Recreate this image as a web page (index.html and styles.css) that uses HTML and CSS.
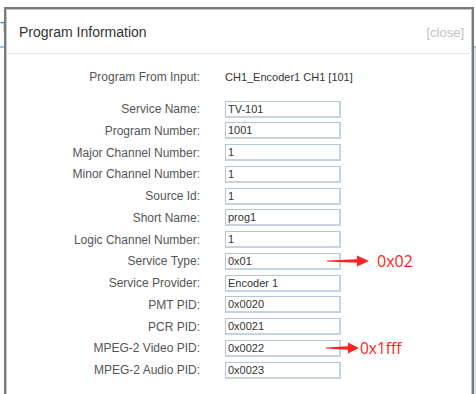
FILE: index.html
```html
<!DOCTYPE html>
<html lang="en">

<head>
    <meta charset="UTF-8">
    <title>Program Information</title>
    <link rel="stylesheet" href="styles.css">
</head>

<body>
    <div class="page">
        <div class="page_tabs"><span class="page_tab">T</span></div>
        <div class="page_panel"></div>
    </div>

    <div class="dialog">
        <header class="dialog_head">
            <h1>Program Information</h1>
            <a href="#" class="dialog_close">[close]</a>
        </header>
        <div class="dialog_body">
            <div class="row row_first">
                <label>Program From Input:</label>
                <span class="value">CH1_Encoder1 CH1 [101]</span>
            </div>
            <div class="row"><label>Service Name:</label><input type="text" value="TV-101"></div>
            <div class="row"><label>Program Number:</label><input type="text" value="1001"></div>
            <div class="row"><label>Major Channel Number:</label><input type="text" value="1"></div>
            <div class="row"><label>Minor Channel Number:</label><input type="text" value="1"></div>
            <div class="row"><label>Source Id:</label><input type="text" value="1"></div>
            <div class="row"><label>Short Name:</label><input type="text" value="prog1"></div>
            <div class="row"><label>Logic Channel Number:</label><input type="text" value="1"></div>
            <div class="row">
                <label>Service Type:</label><input type="text" value="0x01">
                <div class="note note_type">
                    <svg width="42" height="12" viewBox="0 0 42 12"><polygon points="0,5.4 30,4.2 30,0.5 42,6 30,11.5 30,7.8 0,6.6" fill="#f22"/></svg>
                    <span>0x02</span>
                </div>
            </div>
            <div class="row"><label>Service Provider:</label><input type="text" value="Encoder 1"></div>
            <div class="row"><label>PMT PID:</label><input type="text" value="0x0020"></div>
            <div class="row"><label>PCR PID:</label><input type="text" value="0x0021"></div>
            <div class="row">
                <label>MPEG-2 Video PID:</label><input type="text" value="0x0022">
                <div class="note note_pid">
                    <svg width="33" height="12" viewBox="0 0 33 12"><polygon points="0,5.4 22,4.2 22,0.5 33,6 22,11.5 22,7.8 0,6.6" fill="#f22"/></svg>
                    <span>0x1fff</span>
                </div>
            </div>
            <div class="row"><label>MPEG-2 Audio PID:</label><input type="text" value="0x0023"></div>
        </div>
    </div>
</body>

</html>
```

FILE: styles.css
```css
* {
    margin: 0;
    padding: 0;
    box-sizing: border-box;
}

body {
    font-family: "Liberation Sans", Arial, sans-serif;
    background: #fff;
    overflow: hidden;
}

/* 背景页面 */

.page_tabs {
    height: 48px;
    padding-top: 19px;
    border-bottom: 2px solid #9cc3e0;
}

.page_tab {
    display: block;
    width: 4px;
    overflow: hidden;
    color: #3a86c4;
    font-size: 14px;
}

.page_panel {
    height: 346px;
    margin-left: 473px;
    border-left: 1px solid #d8e8f4;
    background-color: #cfe3f3;
}

/* 弹窗 */

.dialog {
    position: absolute;
    left: 4px;
    top: 7px;
    width: 470px;
    height: 387px;
    background: #fff;
    border: 2px solid #7a7a7a;
    border-bottom: none;
    box-shadow: inset 1px 1px 0 #c4c4c4, inset -1px 0 0 #c4c4c4;
}

.dialog_head {
    display: flex;
    align-items: center;
    justify-content: space-between;
    height: 45px;
    padding: 2px 8px 0 13px;
    border-bottom: 1px solid #e6e6e6;
}

.dialog_head h1 {
    font-size: 14px;
    font-weight: normal;
    color: #333;
}

.dialog_close {
    font-size: 13px;
    color: #c2c2c2;
    text-decoration: none;
}

.dialog_body {
    padding-top: 14px;
}

.row {
    position: relative;
    display: grid;
    grid-template-columns: 194px 116px;
    column-gap: 25px;
    align-items: center;
    height: 17px;
    margin-bottom: 4.75px;
}

.row_first {
    margin-bottom: 15.5px;
}

.row label {
    text-align: right;
    font-size: 12px;
    color: #555;
}

.value {
    font-size: 11px;
    color: #333;
    white-space: nowrap;
}

.row input {
    width: 116px;
    height: 17px;
    padding: 0 2px;
    border-style: solid;
    border-width: 1px 2px 2px 1px;
    border-color: #b4c6d9 #c6d3e0 #c6d3e0 #b4c6d9;
    font-family: "Liberation Sans", Arial, sans-serif;
    font-size: 11px;
    color: #333;
    outline: none;
}

/* 红色标注 */

.note {
    position: absolute;
    top: -3px;
    display: flex;
    align-items: center;
    color: #f22;
    font-family: "Open Sans", "Liberation Sans", sans-serif;
    white-space: nowrap;
}

.note_type {
    left: 321px;
    font-size: 16px;
    gap: 8px;
}

.note_pid {
    left: 320px;
    font-size: 15.5px;
    gap: 1px;
}
```
